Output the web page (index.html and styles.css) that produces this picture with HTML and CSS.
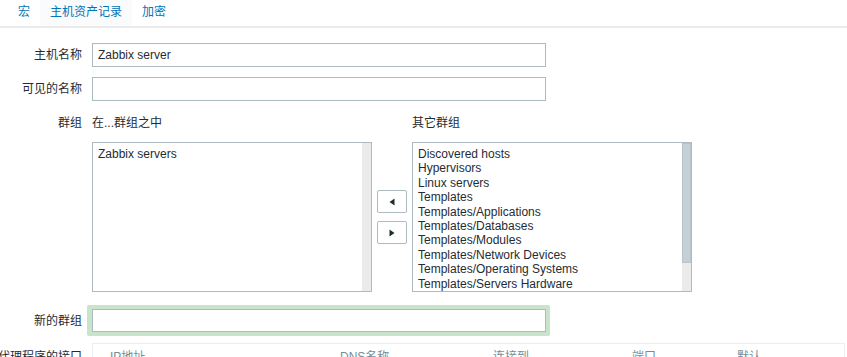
FILE: index.html
```html
<!DOCTYPE html>
<html lang="zh-CN">
<head>
    <meta charset="UTF-8">
    <meta name="viewport" content="width=device-width, initial-scale=1.0">
    <title>主机 - Zabbix</title>
    <link rel="stylesheet" href="styles.css">
</head>
<body>
    <div class="tabs">
        <a class="tab" href="#">宏</a>
        <a class="tab tab-hover" href="#">主机资产记录</a>
        <a class="tab" href="#">加密</a>
    </div>

    <form class="host-form">
        <div class="row">
            <label class="label" for="host">主机名称</label>
            <div class="field">
                <input class="text-input" type="text" id="host" value="Zabbix server">
            </div>
        </div>

        <div class="row">
            <label class="label" for="visible">可见的名称</label>
            <div class="field">
                <input class="text-input" type="text" id="visible">
            </div>
        </div>

        <div class="row row-groups">
            <span class="label label-top">群组</span>
            <div class="groups">
                <div class="group-title">在...群组之中</div>
                <div></div>
                <div class="group-title">其它群组</div>

                <div class="listbox">
                    <div class="options">
                        <div class="option">Zabbix servers</div>
                    </div>
                    <div class="scrollbar"></div>
                </div>

                <div class="move-btns">
                    <button type="button" class="move-btn" title="添加">
                        <svg width="6" height="8" viewBox="0 0 6 8"><path d="M5.5 0.5 L0.5 4 L5.5 7.5 Z" fill="#1f2c33"/></svg>
                    </button>
                    <button type="button" class="move-btn" title="移除">
                        <svg width="6" height="8" viewBox="0 0 6 8"><path d="M0.5 0.5 L5.5 4 L0.5 7.5 Z" fill="#1f2c33"/></svg>
                    </button>
                </div>

                <div class="listbox">
                    <div class="options">
                        <div class="option">Discovered hosts</div>
                        <div class="option">Hypervisors</div>
                        <div class="option">Linux servers</div>
                        <div class="option">Templates</div>
                        <div class="option">Templates/Applications</div>
                        <div class="option">Templates/Databases</div>
                        <div class="option">Templates/Modules</div>
                        <div class="option">Templates/Network Devices</div>
                        <div class="option">Templates/Operating Systems</div>
                        <div class="option">Templates/Servers Hardware</div>
                    </div>
                    <div class="scrollbar">
                        <div class="scroll-thumb" style="height: 81%"></div>
                    </div>
                </div>
            </div>
        </div>

        <div class="row row-new">
            <label class="label" for="newgroup">新的群组</label>
            <div class="field">
                <div class="new-highlight">
                    <input class="text-input" type="text" id="newgroup">
                </div>
            </div>
        </div>

        <div class="row row-interfaces">
            <span class="label label-top">代理程序的接口</span>
            <div class="interfaces">
                <div class="iface-head">
                    <span>IP地址</span>
                    <span>DNS名称</span>
                    <span>连接到</span>
                    <span>端口</span>
                    <span>默认</span>
                </div>
            </div>
        </div>
    </form>
</body>
</html>
```

FILE: styles.css
```css
* {
    margin: 0;
    padding: 0;
    box-sizing: border-box;
}

body {
    font-family: 'Liberation Sans', Arial, 'Noto Sans CJK SC', sans-serif;
    font-size: 12px;
    color: #1f2c33;
    background: #fff;
    overflow: hidden;
}

/* tabs */
.tabs {
    display: flex;
    padding-left: 8px;
    border-bottom: 2px solid #ebebeb;
}

.tab {
    display: block;
    padding: 5px 10px 7px;
    line-height: 14px;
    color: #0275b8;
    text-decoration: none;
}

.tab-hover {
    background: #fafbfc;
}

/* form */
.host-form {
    padding-top: 15px;
}

.row {
    display: grid;
    grid-template-columns: 82px 1fr;
    column-gap: 10px;
    align-items: center;
    margin-bottom: 10px;
}

.label {
    display: flex;
    justify-content: flex-end;
    white-space: nowrap;
    line-height: 14px;
}

.label-top {
    align-self: start;
}

.text-input {
    display: block;
    width: 454px;
    height: 24px;
    padding: 0 5px;
    border: 1px solid #acbbc2;
    border-radius: 0;
    font-family: inherit;
    font-size: 12px;
    color: #1f2c33;
    background: #fff;
    outline: none;
}

/* groups */
.row-groups {
    margin-top: 15px;
    margin-bottom: 13px;
}

.groups {
    display: grid;
    grid-template-columns: 280px 30px 280px;
    column-gap: 5px;
    row-gap: 12px;
    align-items: center;
}

.group-title {
    line-height: 14px;
}

.listbox {
    display: flex;
    height: 150px;
    border: 1px solid #acbbc2;
    background: #fff;
    overflow: hidden;
}

.options {
    flex: 1;
    padding: 4px 0;
    overflow: hidden;
}

.option {
    padding: 0 5px;
    line-height: 14.4px;
    white-space: nowrap;
}

.scrollbar {
    width: 9px;
    flex-shrink: 0;
    background: #ebebeb;
}

.scroll-thumb {
    background: #c5d0d6;
    border: 1px solid #b7c4ca;
}

.move-btns {
    display: flex;
    flex-direction: column;
    gap: 8px;
}

.move-btn {
    display: flex;
    align-items: center;
    justify-content: center;
    width: 30px;
    height: 23px;
    border: 1px solid #acbbc2;
    border-radius: 2px;
    background: #fff;
    cursor: pointer;
}

/* new group */
.row-new {
    margin-bottom: 7px;
}

.row-new .field {
    margin-left: -5px;
}

.new-highlight {
    display: inline-block;
    padding: 4px;
    background: #c8e5cb;
    border-radius: 2px;
}

.new-highlight .text-input {
    height: 23px;
    margin-left: 1px;
}

/* interfaces */
.row-interfaces {
    margin-bottom: 0;
}

.row-interfaces .label {
    padding-top: 7px;
}

.interfaces {
    border: 1px solid #ebeef0;
    margin-right: 2px;
    height: 60px;
}

.iface-head {
    display: grid;
    grid-template-columns: 230px 153px 139px 105px 1fr;
    padding: 6px 0 0 17px;
    line-height: 14px;
    color: #768d99;
}
```
